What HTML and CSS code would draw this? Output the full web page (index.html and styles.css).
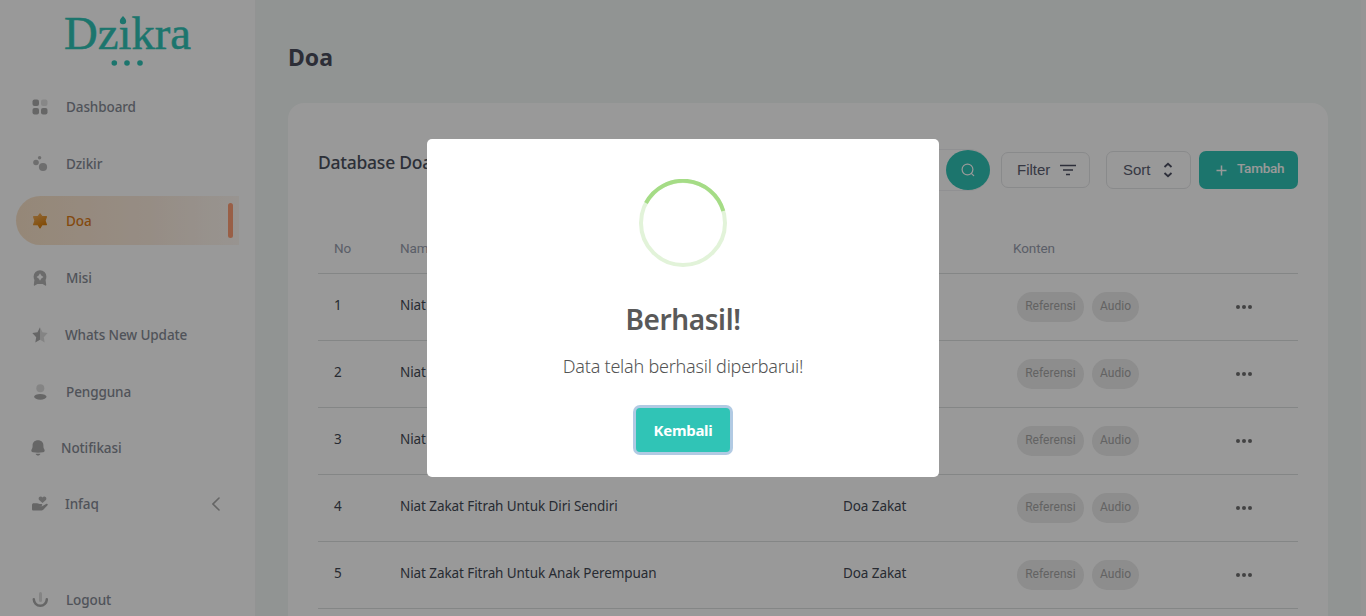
FILE: index.html
```html
<!DOCTYPE html>
<html lang="id">
<head>
<meta charset="utf-8">
<title>Dzikra - Doa</title>
<link rel="stylesheet" href="styles.css">
</head>
<body>
<div class="app">
  <aside class="sidebar">
    <div class="logo">
      <svg width="140" height="72" viewBox="0 -12 140 72" fill="#30c4b6">
        <text class="logo-text" x="1" y="37" textLength="127" lengthAdjust="spacingAndGlyphs">Dzıkra</text>
        <path d="M60 4c1.500 1.900 3.200 3.200 3.200 5a3.200 3.200 0 0 1-6.400 0c0-1.800 1.700-3.100 3.200-5z"/>
        <circle cx="51.300" cy="51" r="2.800"/><circle cx="64" cy="51" r="2.800"/><circle cx="77" cy="51" r="2.800"/>
      </svg>
    </div>
    <nav class="menu">
      <a class="item"><svg class="icon" viewBox="0 0 16 16"><rect x=".5" y=".5" width="6.500" height="6.500" rx="2"/><rect x="9" y=".5" width="6.500" height="6.500" rx="2" opacity=".35"/><rect x=".5" y="9" width="6.500" height="6.500" rx="2"/><rect x="9" y="9" width="6.500" height="6.500" rx="2"/></svg><span>Dashboard</span></a>
      <a class="item"><svg class="icon" viewBox="0 0 16 16"><circle cx="4" cy="6.500" r="2.800" opacity=".85"/><circle cx="7.600" cy="1.700" r="1.700" opacity=".85"/><circle cx="11" cy="11" r="4.100" opacity=".85"/></svg><span>Dzikir</span></a>
      <a class="item active"><svg class="icon" viewBox="0 0 16 16"><defs><linearGradient id="gold" x1="0" y1="0" x2=".5" y2="1"><stop offset="0" stop-color="#f2ae5c"/><stop offset="1" stop-color="#d87f0c"/></linearGradient></defs><path fill="url(#gold)" stroke="url(#gold)" stroke-width="1.200" stroke-linejoin="round" d="M8 .8l2 2.900h4.400L13 7.700l1.400 4H10L8 14.900l-2-3.200H1.600l1.400-4-1.400-4H6z"/></svg><span>Doa</span><i class="marker"></i></a>
      <a class="item"><svg class="icon" viewBox="0 0 16 16"><path opacity=".9" fill-rule="evenodd" d="M8 .2a6.400 6.400 0 0 1 6.400 6.400c0 1.400-.4 2.500-.8 3.500l.6 4.600c.1.900-.5 1.200-1 .8L10.600 14H5.400l-2.600 1.500c-.5.400-1.100.1-1-.8l.6-4.600c-.4-1-.8-2.100-.8-3.500A6.400 6.400 0 0 1 8 .2zM8 3.300L6.700 5.500 4.500 7l2.200 1.600L8 10.700l1.300-2.100L11.500 7 9.300 5.500z"/></svg><span>Misi</span></a>
      <a class="item wide"><svg class="icon" viewBox="0 0 16 16"><path d="M8 .3v12.500l-4.700 2.800.9-5.400L.3 6.100l5.200-.9z"/><path opacity=".4" d="M8 .3l2.500 4.900 5.200.9-3.900 4.100.9 5.400L8 12.800z"/></svg><span>Whats New Update</span></a>
      <a class="item"><svg class="icon" viewBox="0 0 16 16"><circle cx="8.300" cy="4.300" r="4" opacity=".4"/><ellipse cx="8.300" cy="12.800" rx="6.200" ry="2.900"/></svg><span>Pengguna</span></a>
      <a class="item bell"><svg class="icon" viewBox="0 0 16 16"><path d="M8 .3c3.400 0 5.400 2.200 5.400 5.200 0 2 .2 2.700.9 3.700.9 1.300.2 2.800-1.300 3.100-3.300.5-6.700.5-10 0-1.500-.3-2.200-1.800-1.300-3.100.7-1 .9-1.700.9-3.700C2.600 2.500 4.600.3 8 .3z"/><path d="M5.600 13.700h4.800c-.5 2.400-4.300 2.400-4.800 0z"/></svg><span>Notifikasi</span></a>
      <a class="item infaq"><svg class="icon" viewBox="0 0 16 16"><path opacity=".9" d="M10.500 7L7.100 3.900C5.400 1.900 8.600-.8 10.500 1.500c1.900-2.300 5.100.4 3.400 2.400z"/><path d="M0 9.200c0-1.500.6-2 2-2h3c1.500 0 2.200.8 4 .8 1.500 0 2 1.800.3 2.100H7l3.200.2L14 7.900c1.300-.7 2.400.3 1.300 1.500l-3.800 4c-.8.8-1.400 1.100-2.500 1.100H1.500C.5 14.500 0 14 0 13.200z"/></svg><span>Infaq</span><svg class="chevron" viewBox="0 0 8 14"><path d="M7 1L1 7l6 6"/></svg></a>
      <a class="item logout"><svg class="icon" viewBox="0 0 16 16"><path opacity=".4" d="M7 1.500a1.500 1.500 0 0 1 3 0v7a1.500 1.500 0 0 1-3 0z"/><path class="arc" d="M1.800 7.200a6.500 6.500 0 0 0 13 0"/></svg><span>Logout</span></a>
    </nav>
  </aside>
  <main class="main">
    <h1 class="page-title">Doa</h1>
    <section class="card">
      <header class="toolbar">
        <h2 class="card-title">Database Doa</h2>
        <div class="search"><button class="search-btn"><svg viewBox="0 0 14 14"><circle cx="6.500" cy="6.500" r="5.400"/><path d="M10.300 10.300l2.400 2.400"/></svg></button></div>
        <button class="outline filter"><span>Filter</span><svg viewBox="0 0 16 12"><path d="M0 1.500h16M3 6h10M6 10.500h4"/></svg></button>
        <button class="outline sort"><span>Sort</span><svg viewBox="0 0 10 16"><path d="M1.500 5L5 1.800 8.500 5M1.500 11L5 14.200 8.500 11"/></svg></button>
        <button class="add"><svg viewBox="0 0 11 11"><path d="M5.500 .5v10M.5 5.500h10"/></svg><span>Tambah</span></button>
      </header>
      <div class="table">
        <div class="row head"><span>No</span><span>Nama</span><span>Kategori</span><span class="konten">Konten</span></div>
        <div class="row"><span>1</span><span>Niat Zakat Fitrah</span><span>Doa Zakat</span><div class="chips"><b class="chip">Referensi</b><b class="chip audio">Audio</b></div><svg class="dots" viewBox="0 0 16 4"><circle cx="2" cy="2" r="2"/><circle cx="8" cy="2" r="2"/><circle cx="14" cy="2" r="2"/></svg></div>
        <div class="row"><span>2</span><span>Niat Zakat Fitrah</span><span>Doa Zakat</span><div class="chips"><b class="chip">Referensi</b><b class="chip audio">Audio</b></div><svg class="dots" viewBox="0 0 16 4"><circle cx="2" cy="2" r="2"/><circle cx="8" cy="2" r="2"/><circle cx="14" cy="2" r="2"/></svg></div>
        <div class="row"><span>3</span><span>Niat Zakat Fitrah</span><span>Doa Zakat</span><div class="chips"><b class="chip">Referensi</b><b class="chip audio">Audio</b></div><svg class="dots" viewBox="0 0 16 4"><circle cx="2" cy="2" r="2"/><circle cx="8" cy="2" r="2"/><circle cx="14" cy="2" r="2"/></svg></div>
        <div class="row"><span>4</span><span>Niat Zakat Fitrah Untuk Diri Sendiri</span><span>Doa Zakat</span><div class="chips"><b class="chip">Referensi</b><b class="chip audio">Audio</b></div><svg class="dots" viewBox="0 0 16 4"><circle cx="2" cy="2" r="2"/><circle cx="8" cy="2" r="2"/><circle cx="14" cy="2" r="2"/></svg></div>
        <div class="row"><span>5</span><span>Niat Zakat Fitrah Untuk Anak Perempuan</span><span>Doa Zakat</span><div class="chips"><b class="chip">Referensi</b><b class="chip audio">Audio</b></div><svg class="dots" viewBox="0 0 16 4"><circle cx="2" cy="2" r="2"/><circle cx="8" cy="2" r="2"/><circle cx="14" cy="2" r="2"/></svg></div>
      </div>
    </section>
  </main>
  <div class="scroll-track"></div>
</div>
<div class="overlay">
  <div class="modal">
    <svg class="ring" viewBox="0 0 88 88"><circle cx="44" cy="44" r="42" stroke="#e2f3d9"/><path stroke="#a5dc86" d="M7 24A42 42 0 0 1 84.300 32"/></svg>
    <h2 class="modal-title">Berhasil!</h2>
    <p class="modal-text">Data telah berhasil diperbarui!</p>
    <button class="confirm">Kembali</button>
  </div>
</div>
</body>
</html>
```
FILE: styles.css
```css
* { box-sizing: border-box; }
body { margin: 0; height: 616px; overflow: hidden; font-family: "Noto Sans", "Open Sans", sans-serif; color: #343b49; }
button { font: inherit; border: 0; padding: 0; display: flex; align-items: center; }
h1, h2, p { margin: 0; }
svg { flex: none; display: block; }
.app { display: flex; height: 616px; background: #f2f7f5; }

.sidebar { width: 256px; flex: none; background: #fff; border-right: 1px solid #f4f6f5; }
.logo { height: 82px; padding-left: 63px; }
.logo svg { overflow: visible; }
.logo-text { font: 47px "Liberation Serif", serif; stroke: #30c4b6; stroke-width: .5px; }
.menu { padding: 0 16px; display: flex; flex-direction: column; }
.item { height: 49px; margin-bottom: 8px; width: 223px; padding-left: 16px; display: flex; align-items: center; gap: 18px; font-size: 13.5px; letter-spacing: -.1px; font-weight: 500; color: #868b95; white-space: nowrap; }
.icon { width: 16px; height: 16px; fill: #aaaaab; }
.item.active { background: linear-gradient(90deg, #f9e2c8 0%, #fbebdd 60%, #fdf7f1 100%); border-radius: 25px 0 0 25px; color: #dc7c19; }
.marker { width: 5px; height: 35px; margin: 0 6px 0 auto; border-radius: 3px; background: #ff9f75; }
.wide { gap: 17px; }
.bell { height: 48px; padding-left: 14px; gap: 15px; }
.infaq { gap: 17px; margin-bottom: 56px; height: 48px; }
.logout { height: 32px; margin-bottom: 0; }
.chevron { width: 8px; height: 14px; margin: 0 19px 0 auto; fill: none; stroke: #a8a8a8; stroke-width: 1.6; stroke-linecap: round; }
.arc { fill: none; stroke: #aaaaab; stroke-width: 2.500; stroke-linecap: round; }

.main { flex: 1; padding: 40px 33px 0 32px; }
.page-title { font-size: 23px; line-height: 35px; font-weight: 700; color: #4a4d5c; }
.card { margin-top: 28px; height: 513px; background: #fff; border-radius: 16px 16px 0 0; padding: 46px 30px 0; }
.toolbar { display: flex; align-items: center; height: 42px; }
.card-title { font-size: 17.5px; letter-spacing: -.25px; line-height: 26px; font-weight: 500; color: #4b515e; margin-bottom: 17px; }
.search { width: 273px; height: 42px; margin-left: auto; border: 1px solid #f0f1f3; border-radius: 21px; display: flex; justify-content: flex-end; align-items: center; }
.search-btn { width: 44px; height: 40px; border-radius: 22px / 20px; background: #30c4b6; justify-content: center; margin-right: -1px; }
.search-btn svg { width: 14px; height: 14px; fill: none; stroke: #fff; stroke-width: 1.200; stroke-linecap: round; }
.outline { border: 1px solid #e5e6e8; border-radius: 7px; background: #fff; font-family: "Liberation Sans", sans-serif; font-size: 15px; color: #5a5e70; }
.outline span { margin-top: -2px; }
.outline svg { fill: none; stroke: #4c4f62; stroke-width: 1.600; }
.filter { width: 89px; height: 36px; margin-left: 11px; padding: 0 13px 0 15px; justify-content: space-between; }
.filter svg { width: 16px; height: 12px; }
.sort { width: 85px; height: 38px; margin-left: 16px; padding: 0 17px 0 16px; justify-content: space-between; }
.sort svg { width: 10px; height: 16px; stroke-width: 1.8; }
.add { width: 99px; height: 38px; margin-left: 8px; border-radius: 7px; background: #30c4b6; color: #fff; padding-left: 17px; gap: 10px; font-family: Roboto, sans-serif; font-size: 13.5px; letter-spacing: -.25px; font-weight: 500; }
.add span { margin-top: -4px; }
.add svg { width: 11px; height: 11px; stroke: #fff; stroke-width: 1.500; }

.table { margin-top: 33px; }
.row { height: 67px; border-bottom: 1px solid #dddfe0; display: grid; grid-template-columns: 66px 443px 174px 219px auto; justify-content: start; align-items: center; padding-left: 16px; font-size: 13.5px; letter-spacing: -.08px; color: #434954; white-space: nowrap; }
.row > span { margin-top: -4px; }
.head { height: 50px; font-family: Roboto, sans-serif; color: #979dad; }
.row.head > span { margin-top: -1px; }
.head .konten { margin-left: -4px; }
.chips { display: flex; gap: 8px; }
.chip { width: 67px; height: 30px; border-radius: 15px; background: #ebebeb; color: #a5a5a5; font: 400 12px/28px Roboto, sans-serif; letter-spacing: .05px; text-align: center; }
.chip.audio { width: 47px; }
.dots { width: 16px; height: 4px; fill: #6f6f70; }
.scroll-track { width: 5px; background: #f8f8f8; }

.overlay { position: fixed; inset: 0; background: rgba(0, 0, 0, .4); display: flex; justify-content: center; align-items: center; }
.modal { width: 512px; height: 338px; background: #fff; border-radius: 5px; display: flex; flex-direction: column; align-items: center; padding-top: 40px; }
.ring { width: 88px; height: 88px; fill: none; stroke-width: 4; }
.modal-title { margin-top: 32px; font-size: 28px; letter-spacing: -.4px; line-height: 40px; font-weight: 600; color: #595959; }
.modal-text { margin-top: 15px; font-size: 18px; letter-spacing: -.23px; line-height: 24px; font-weight: 300; color: #545454; }
.confirm { margin-top: 30px; width: 94px; height: 44px; justify-content: center; border-radius: 4px; background: #30c4b6; color: #fff; font-size: 15px; letter-spacing: -.3px; font-weight: 700; box-shadow: 0 0 0 3px rgba(100, 150, 200, .5); }
```
